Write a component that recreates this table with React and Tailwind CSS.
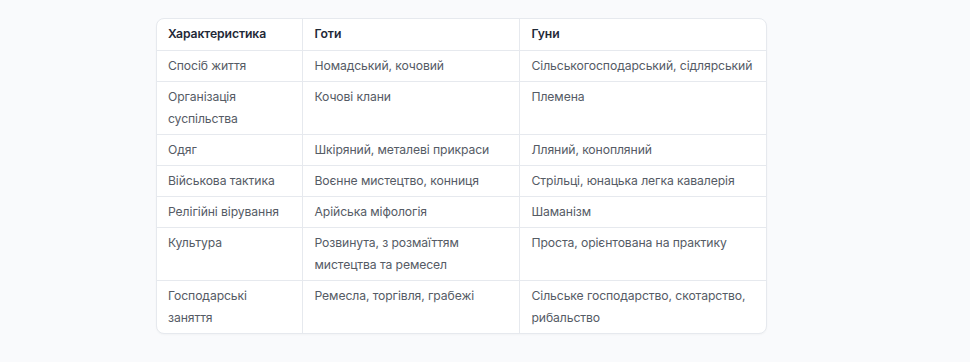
import React from "react";

const rows = [
  ["Спосіб життя", "Номадський, кочовий", "Сільськогосподарський, сідлярський"],
  ["Організація суспільства", "Кочові клани", "Племена"],
  ["Одяг", "Шкіряний, металеві прикраси", "Лляний, конопляний"],
  ["Військова тактика", "Воєнне мистецтво, конниця", "Стрільці, юнацька легка кавалерія"],
  ["Релігійні вірування", "Арійська міфологія", "Шаманізм"],
  ["Культура", "Розвинута, з розмаїттям мистецтва та ремесел", "Проста, орієнтована на практику"],
  ["Господарські заняття", "Ремесла, торгівля, грабежі", "Сільське господарство, скотарство, рибальство"],
];

const App = () => {
  return (
    <div className="w-[970px] h-[362px] bg-[#f9fafc] pt-[18px] font-['Inter',sans-serif]">
      <div className="ml-[156px] w-[611px] rounded-lg border border-[#e6e9ee] bg-white overflow-hidden shadow-[0_1px_2px_rgba(0,0,0,0.03)]">
        <table className="w-full border-collapse text-[12.2px] leading-[22px] tracking-[-0.1px] table-fixed">
          <colgroup>
            <col className="w-[145px]" />
            <col className="w-[217px]" />
            <col />
          </colgroup>
          <thead>
            <tr className="border-b border-[#e6e9ee]">
              <th className="text-left font-semibold text-[#1f2937] px-[11px] py-1 h-[31px] border-r border-[#e6e9ee]">
                Характеристика
              </th>
              <th className="text-left font-semibold text-[#1f2937] px-3 py-1 border-r border-[#e6e9ee]">
                Готи
              </th>
              <th className="text-left font-semibold text-[#1f2937] pl-3 pr-1 py-1">Гуни</th>
            </tr>
          </thead>
          <tbody>
            {rows.map((r, i) => (
              <tr
                key={i}
                className={i < rows.length - 1 ? "border-b border-[#e6e9ee]" : ""}
              >
                <td className="align-top text-[#555b65] px-[11px] py-[4px] border-r border-[#e6e9ee]">
                  {r[0]}
                </td>
                <td className="align-top text-[#555b65] px-3 py-[4px] border-r border-[#e6e9ee]">
                  {r[1]}
                </td>
                <td className="align-top text-[#555b65] pl-3 pr-1 py-[4px]">{r[2]}</td>
              </tr>
            ))}
          </tbody>
        </table>
      </div>
    </div>
  );
};

export default App;
